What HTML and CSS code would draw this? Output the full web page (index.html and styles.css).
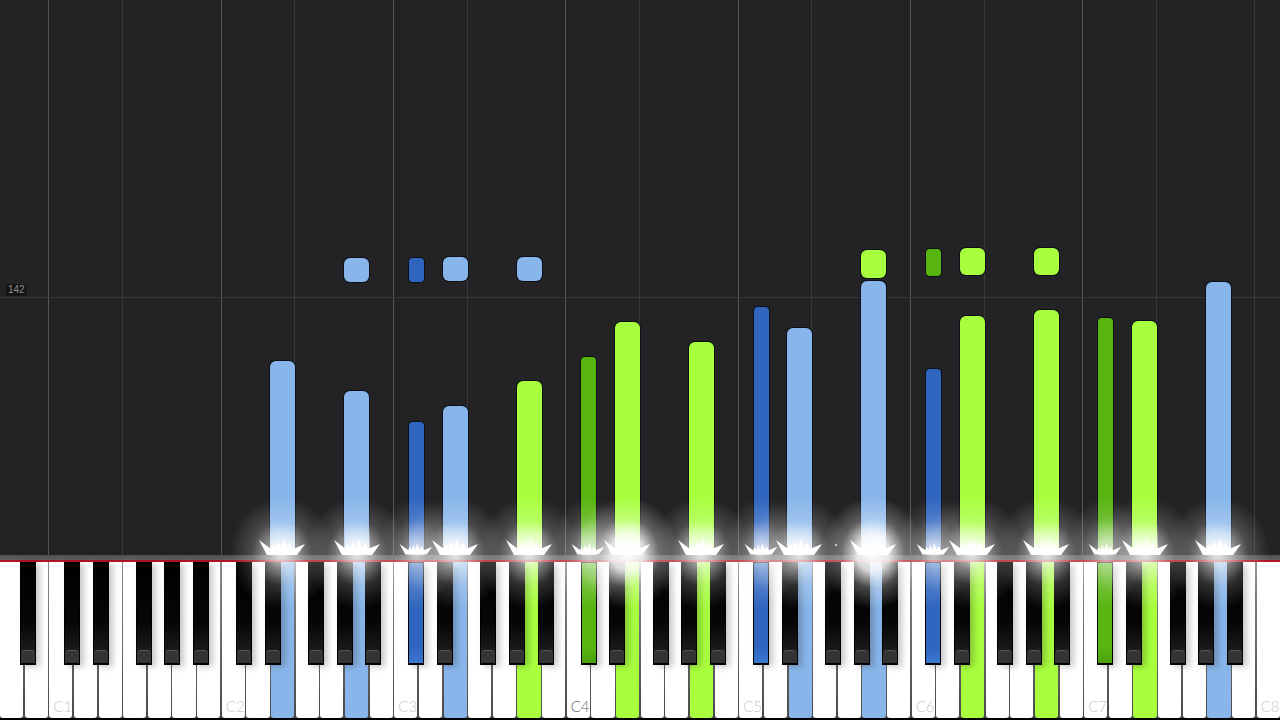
FILE: index.html
```html
<!DOCTYPE html>
<html lang="en">
<head>
<meta charset="utf-8">
<title>Piano roll</title>
<link rel="stylesheet" href="styles.css">
</head>
<body>
<svg class="defs" width="0" height="0" aria-hidden="true">
  <symbol id="spark" viewBox="0 0 48 20">
    <path d="M1 5 L13 14 L15 9 L18 14 L20 6 L23 13 L26 4 L29 13 L32 8 L35 14 L47 9 L39 20 L9 20 Z" fill="#fff"/>
  </symbol>
</svg>
<main class="stage">
  <section class="roll">
    <i class="line major" style="left:48px"></i><i class="line" style="left:122px"></i>
    <i class="line major" style="left:221px"></i><i class="line" style="left:294px"></i>
    <i class="line major" style="left:393px"></i><i class="line" style="left:467px"></i>
    <i class="line major" style="left:565px"></i><i class="line" style="left:639px"></i>
    <i class="line major" style="left:738px"></i><i class="line" style="left:811px"></i>
    <i class="line major" style="left:910px"></i><i class="line" style="left:984px"></i>
    <i class="line major" style="left:1082px"></i><i class="line" style="left:1156px"></i>
    <i class="line" style="left:1254px"></i>
    <i class="measure"></i>
    <span class="tempo">142</span>

    <b class="note blue" style="left:270px;top:361px;width:25px;height:200px"></b>
    <b class="note blue" style="left:344px;top:391px;width:25px;height:170px"></b>
    <b class="note blue" style="left:344px;top:258px;width:25px;height:24px"></b>
    <b class="note dkblue" style="left:409px;top:422px;width:15px;height:139px"></b>
    <b class="note dkblue" style="left:409px;top:258px;width:15px;height:24px"></b>
    <b class="note blue" style="left:443px;top:406px;width:25px;height:155px"></b>
    <b class="note blue" style="left:443px;top:257px;width:25px;height:24px"></b>
    <b class="note green" style="left:517px;top:381px;width:25px;height:180px"></b>
    <b class="note blue" style="left:517px;top:257px;width:25px;height:24px"></b>
    <b class="note dkgreen" style="left:581px;top:357px;width:15px;height:204px"></b>
    <b class="note green" style="left:615px;top:322px;width:25px;height:239px"></b>
    <b class="note green" style="left:689px;top:342px;width:25px;height:219px"></b>
    <b class="note dkblue" style="left:754px;top:307px;width:15px;height:254px"></b>
    <b class="note blue" style="left:787px;top:328px;width:25px;height:233px"></b>
    <b class="note blue" style="left:861px;top:281px;width:25px;height:280px"></b>
    <b class="note green" style="left:861px;top:250px;width:25px;height:28px"></b>
    <b class="note dkblue" style="left:926px;top:369px;width:15px;height:192px"></b>
    <b class="note dkgreen" style="left:926px;top:249px;width:15px;height:27px"></b>
    <b class="note green" style="left:960px;top:316px;width:25px;height:245px"></b>
    <b class="note green" style="left:960px;top:248px;width:25px;height:27px"></b>
    <b class="note green" style="left:1034px;top:310px;width:25px;height:251px"></b>
    <b class="note green" style="left:1034px;top:248px;width:25px;height:27px"></b>
    <b class="note dkgreen" style="left:1098px;top:318px;width:15px;height:243px"></b>
    <b class="note green" style="left:1132px;top:321px;width:25px;height:240px"></b>
    <b class="note blue" style="left:1206px;top:282px;width:25px;height:279px"></b>
    <i class="speck"></i>
  </section>
  <div class="rail"></div>
  <section class="keyboard">
    <div class="whites">
      <div class="key"></div><div class="key"></div>
      <div class="key"><span class="label">C1</span></div><div class="key"></div><div class="key"></div><div class="key"></div><div class="key"></div><div class="key"></div><div class="key"></div>
      <div class="key"><span class="label">C2</span></div><div class="key"></div><div class="key blue"></div><div class="key"></div><div class="key"></div><div class="key blue"></div><div class="key"></div>
      <div class="key"><span class="label">C3</span></div><div class="key"></div><div class="key blue"></div><div class="key"></div><div class="key"></div><div class="key green"></div><div class="key"></div>
      <div class="key"><span class="label middle">C4</span></div><div class="key"></div><div class="key green"></div><div class="key"></div><div class="key"></div><div class="key green"></div><div class="key"></div>
      <div class="key"><span class="label">C5</span></div><div class="key"></div><div class="key blue"></div><div class="key"></div><div class="key"></div><div class="key blue"></div><div class="key"></div>
      <div class="key"><span class="label">C6</span></div><div class="key"></div><div class="key green"></div><div class="key"></div><div class="key"></div><div class="key green"></div><div class="key"></div>
      <div class="key"><span class="label">C7</span></div><div class="key"></div><div class="key green"></div><div class="key"></div><div class="key"></div><div class="key blue"></div><div class="key"></div>
      <div class="key"><span class="label">C8</span></div>
    </div>
    <i class="black" style="left:20px"></i>
    <i class="black" style="left:64px"></i><i class="black" style="left:93px"></i><i class="black" style="left:136px"></i><i class="black" style="left:164px"></i><i class="black" style="left:193px"></i>
    <i class="black" style="left:236px"></i><i class="black" style="left:265px"></i><i class="black" style="left:308px"></i><i class="black" style="left:337px"></i><i class="black" style="left:365px"></i>
    <i class="black dkblue" style="left:408px"></i><i class="black" style="left:437px"></i><i class="black" style="left:480px"></i><i class="black" style="left:509px"></i><i class="black" style="left:538px"></i>
    <i class="black dkgreen" style="left:581px"></i><i class="black" style="left:609px"></i><i class="black" style="left:653px"></i><i class="black" style="left:681px"></i><i class="black" style="left:710px"></i>
    <i class="black dkblue" style="left:753px"></i><i class="black" style="left:782px"></i><i class="black" style="left:825px"></i><i class="black" style="left:854px"></i><i class="black" style="left:882px"></i>
    <i class="black dkblue" style="left:925px"></i><i class="black" style="left:954px"></i><i class="black" style="left:997px"></i><i class="black" style="left:1026px"></i><i class="black" style="left:1054px"></i>
    <i class="black dkgreen" style="left:1097px"></i><i class="black" style="left:1126px"></i><i class="black" style="left:1170px"></i><i class="black" style="left:1198px"></i><i class="black" style="left:1227px"></i>
  </section>

  <div class="glow" style="left:282px"><svg class="spark"><use href="#spark"/></svg></div>
  <div class="glow" style="left:357px"><svg class="spark"><use href="#spark"/></svg></div>
  <div class="glow small" style="left:416px"><svg class="spark"><use href="#spark"/></svg></div>
  <div class="glow" style="left:455px"><svg class="spark"><use href="#spark"/></svg></div>
  <div class="glow" style="left:529px"><svg class="spark"><use href="#spark"/></svg></div>
  <div class="glow small" style="left:588px"><svg class="spark"><use href="#spark"/></svg></div>
  <div class="glow strong" style="left:627px"><svg class="spark"><use href="#spark"/></svg></div>
  <div class="glow" style="left:701px"><svg class="spark"><use href="#spark"/></svg></div>
  <div class="glow small" style="left:761px"><svg class="spark"><use href="#spark"/></svg></div>
  <div class="glow" style="left:799px"><svg class="spark"><use href="#spark"/></svg></div>
  <div class="glow strong" style="left:873px"><svg class="spark"><use href="#spark"/></svg></div>
  <div class="glow small" style="left:933px"><svg class="spark"><use href="#spark"/></svg></div>
  <div class="glow" style="left:972px"><svg class="spark"><use href="#spark"/></svg></div>
  <div class="glow" style="left:1046px"><svg class="spark"><use href="#spark"/></svg></div>
  <div class="glow small" style="left:1105px"><svg class="spark"><use href="#spark"/></svg></div>
  <div class="glow" style="left:1145px"><svg class="spark"><use href="#spark"/></svg></div>
  <div class="glow" style="left:1218px"><svg class="spark"><use href="#spark"/></svg></div>
</main>
</body>
</html>
```
FILE: styles.css
```css
* { box-sizing: border-box; }
html, body { margin: 0; padding: 0; background: #232325; }
.defs { position: absolute; }

.stage {
  position: relative;
  width: 1280px;
  height: 720px;
  overflow: hidden;
  display: flex;
  flex-direction: column;
}

/* Falling-note canvas */
.roll {
  position: relative;
  flex: 0 0 555px;
  overflow: hidden;
  background: #232325;
}
.line {
  position: absolute;
  top: 0;
  bottom: 0;
  width: 1px;
  background: #39393b;
}
.line.major { background: #555558; }
.measure {
  position: absolute;
  left: 0;
  right: 0;
  top: 297px;
  height: 1px;
  background: #38383a;
}
.tempo {
  position: absolute;
  left: 6px;
  top: 284px;
  padding: 0 2px;
  font: 10px/12px "Liberation Sans", Arial, sans-serif;
  color: #8e8e8e;
  background: #141415;
  border-radius: 2px;
}
.note {
  position: absolute;
  border-radius: 6px;
  box-shadow: 0 0 0 1px #0c1016;
}
.speck {
  position: absolute;
  left: 835px;
  top: 544px;
  width: 2px;
  height: 2px;
  border-radius: 50%;
  background: #ddd;
}
.blue { background: #88b6ea; }
.green { background: #a8ff3e; }
.note.dkblue { background: #2f65bf; border-radius: 4px; }
.note.dkgreen { background: #58b510; border-radius: 4px; }

/* Divider above the keys */
.rail {
  flex: 0 0 7px;
  background: linear-gradient(#4e4e50 0, #606062 70%, #606062 71%, #a3121e 72%, #c01622 100%);
}

/* Keyboard */
.keyboard {
  position: relative;
  flex: 1;
  background: #000;
}
.whites {
  display: flex;
  gap: 1.5px;
  height: 156px;
  background: linear-gradient(#8a8a8a 0, #4a4a4a 100%);
}
.key {
  flex: 1;
  display: flex;
  align-items: flex-end;
  padding: 0 0 3px 4px;
  background: #fff;
  border-radius: 0 0 3px 3px;
}
.key.blue { background: #88b6ea; }
.key.green { background: #a8ff3e; }
.label {
  font: 300 15px/18px Lato, "Liberation Sans", sans-serif;
  color: #c9c9c9;
}
.label.middle { color: #666; }

.black {
  position: absolute;
  top: 0;
  width: 16px;
  height: 103px;
  border: 1px solid #000;
  border-bottom-width: 2px;
  background: linear-gradient(#000 0, #060606 60%, #242424 100%);
  box-shadow: 4px 2px 6px rgba(0, 0, 0, .22);
}
.black::after {
  content: "";
  position: absolute;
  left: 0;
  right: 0;
  bottom: 0;
  height: 12px;
  border-radius: 4px 4px 0 0;
  border-top: 1px solid #555;
  background: #343434;
}
.black.dkblue { background: linear-gradient(#2f65bf 0, #2f65bf 85%, #3a78d2 100%); }
.black.dkgreen { background: linear-gradient(#58b510 0, #58b510 85%, #4aa00c 100%); }
.black.dkblue::after, .black.dkgreen::after { display: none; }

/* Key-strike glow over notes and keys */
.glow {
  position: absolute;
  top: 497px;
  width: 104px;
  height: 112px;
  margin-left: -52px;
  display: flex;
  justify-content: center;
  align-items: flex-end;
  padding-bottom: 54px;
  background: radial-gradient(closest-side, rgba(255,255,255,.9) 0, rgba(255,255,255,.5) 30%, rgba(255,255,255,.18) 58%, rgba(255,255,255,0) 100%);
  pointer-events: none;
}
.glow::before {
  content: "";
  position: absolute;
  left: 50%;
  top: 26px;
  width: 25px;
  height: 32px;
  margin-left: -12px;
  background: linear-gradient(rgba(255,255,255,0), rgba(255,255,255,.85));
}
.glow.small {
  width: 76px;
  margin-left: -38px;
  background: radial-gradient(closest-side, rgba(255,255,255,.7) 0, rgba(255,255,255,.36) 32%, rgba(255,255,255,.13) 64%, rgba(255,255,255,0) 100%);
}
.glow.small::before {
  width: 15px;
  margin-left: -7px;
  background: linear-gradient(rgba(255,255,255,0), rgba(255,255,255,.5));
}
.glow.strong {
  background: radial-gradient(closest-side, rgba(255,255,255,1) 0, rgba(255,255,255,.85) 32%, rgba(255,255,255,.28) 62%, rgba(255,255,255,0) 100%);
}
.spark { width: 48px; height: 20px; flex: none; position: relative; }
.glow.small .spark { width: 34px; height: 15px; }
```
